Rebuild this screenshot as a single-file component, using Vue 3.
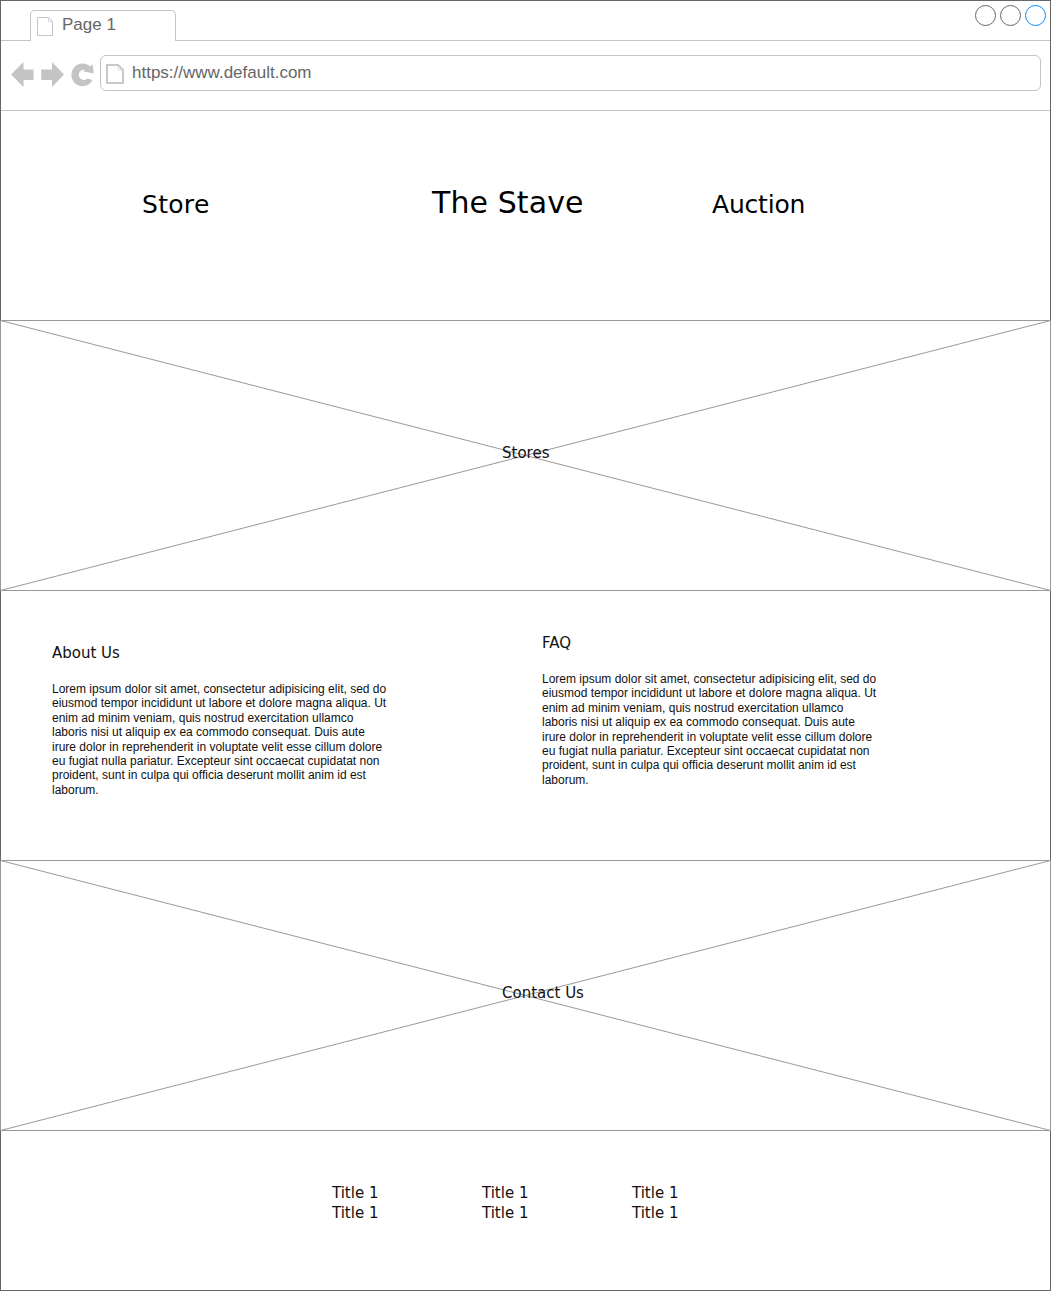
<script setup>
const lorem =
  'Lorem ipsum dolor sit amet, consectetur adipisicing elit, sed do eiusmod tempor incididunt ut labore et dolore magna aliqua. Ut enim ad minim veniam, quis nostrud exercitation ullamco laboris nisi ut aliquip ex ea commodo consequat. Duis aute irure dolor in reprehenderit in voluptate velit esse cillum dolore eu fugiat nulla pariatur. Excepteur sint occaecat cupidatat non proident, sunt in culpa qui officia deserunt mollit anim id est laborum.'
const footer = [
  ['Title 1', 'Title 1'],
  ['Title 1', 'Title 1'],
  ['Title 1', 'Title 1'],
]
</script>

<template>
  <div class="window">
    <div class="tabs">
      <div class="lead"></div>
      <div class="tab">
        <svg class="tab-icon" width="18" height="20" viewBox="0 0 18 20" fill="none" stroke="#c4c4c4">
          <path d="M1.5 .5H12.5L16.5 4.5V18.5H1.5Z" />
          <path d="M12.5 .5V4.5H16.5" stroke-opacity=".6" />
        </svg>
        <span>Page 1</span>
      </div>
      <div class="strip">
        <svg width="72" height="22" viewBox="0 0 72 22" fill="none">
          <circle cx="10.5" cy="10.5" r="10" stroke="#666" />
          <circle cx="35.5" cy="10.5" r="10" stroke="#666" />
          <circle cx="60.5" cy="10.5" r="10" stroke="#008cff" />
        </svg>
      </div>
    </div>

    <div class="toolbar">
      <svg class="nav-icons" width="86" height="28" viewBox="10 61 86 28">
        <g fill="#c4c4c4">
          <path d="M11 74.5L23.5 62V69.5H33.5V80H23.5V87Z" />
          <path d="M64 74.5L52 62V69.5H41.2V80H52V87Z" />
          <path d="M90.2 66.6L92.6 64.2L93.8 73.6L82.6 71.2L85.4 70.1A5 5 0 1 0 87.4 78.4L92.4 80A11.1 11.4 0 1 1 90.2 66.6Z" />
        </g>
      </svg>
      <div class="address">
        <svg class="url-icon" width="20" height="22" viewBox="0 0 20 22" fill="none" stroke="#c8c8c8">
          <path d="M2 2H13L18 7V20H2Z" stroke-width="2" />
          <path d="M13 2V7H18" stroke-opacity=".6" />
        </svg>
        <span>https://www.default.com</span>
      </div>
    </div>

    <header class="site-header">
      <a class="nav-link store">Store</a>
      <h1>The Stave</h1>
      <a class="nav-link auction">Auction</a>
    </header>

    <section class="placeholder">
      <svg width="1051" height="271" viewBox="0 0 1051 271">
        <path d="M.5 .5H1050.5V270.5H.5ZL1050.5 270.5M.5 270.5L1050.5 .5" fill="none" stroke="#999" />
      </svg>
      <span class="label">Stores</span>
    </section>

    <section class="info">
      <article class="about">
        <h2>About Us</h2>
        <p>{{ lorem }}</p>
      </article>
      <article class="faq">
        <h2>FAQ</h2>
        <p>{{ lorem }}</p>
      </article>
    </section>

    <section class="placeholder">
      <svg width="1051" height="271" viewBox="0 0 1051 271">
        <path d="M.5 .5H1050.5V270.5H.5ZL1050.5 270.5M.5 270.5L1050.5 .5" fill="none" stroke="#999" />
      </svg>
      <span class="label">Contact Us</span>
    </section>

    <footer>
      <ul v-for="(col, i) in footer" :key="i">
        <li v-for="(item, j) in col" :key="j">{{ item }}</li>
      </ul>
    </footer>
  </div>
</template>

<style>
body {
  background: #fff;
}
</style>

<style scoped>
.window {
  box-sizing: border-box;
  width: 1051px;
  height: 1291px;
  border: 1px solid #666;
  display: flex;
  flex-direction: column;
  font-family: Verdana, "DejaVu Sans", sans-serif;
  color: #000;
}
.window svg {
  display: block;
  flex: none;
}
.tabs {
  display: flex;
  height: 40px;
  flex: none;
  font: 17px/20px "Liberation Sans", Arial, sans-serif;
  color: #666;
}
.lead {
  box-sizing: border-box;
  width: 29px;
  border-bottom: 1px solid #c4c4c4;
}
.tab {
  box-sizing: border-box;
  width: 146px;
  margin-top: 9px;
  border: 1px solid #c4c4c4;
  border-bottom: 0;
  border-radius: 5px 5px 0 0;
  display: flex;
  padding: 4px 0 0 5px;
}
.tab-icon {
  margin-top: 2px;
}
.tab span {
  margin-left: 8px;
}
.strip {
  box-sizing: border-box;
  flex: 1;
  border-bottom: 1px solid #c4c4c4;
  display: flex;
  justify-content: flex-end;
  padding: 4px 3px 0 0;
}
.toolbar {
  box-sizing: border-box;
  height: 70px;
  flex: none;
  border-bottom: 1px solid #c4c4c4;
  display: flex;
  padding: 14px 9px 0;
}
.nav-icons {
  margin-top: 6px;
}
.address {
  box-sizing: border-box;
  width: 941px;
  height: 36px;
  margin-left: 4px;
  border: 1px solid #c4c4c4;
  border-radius: 6px;
  display: flex;
  padding: 7px 0 0 4px;
  font: 17px/20px "Liberation Sans", Arial, sans-serif;
  color: #666;
}
.address span {
  margin-left: 7px;
}
.site-header {
  height: 209px;
  flex: none;
  display: flex;
  align-items: baseline;
  box-sizing: border-box;
  padding: 74px 0 0 141px;
}
.nav-link {
  width: 290px;
  font-size: 25px;
  line-height: 36px;
}
.store {
  letter-spacing: 0.3px;
}
.auction {
  letter-spacing: -0.2px;
}
h1 {
  width: 280px;
  margin: 0;
  font-size: 30px;
  line-height: 36px;
  font-weight: 400;
  letter-spacing: 0.1px;
}
.placeholder {
  position: relative;
  flex: none;
  width: 1051px;
  height: 271px;
  margin: 0 -1px;
}
.label {
  position: absolute;
  left: 502px;
  top: 123px;
  font-size: 15px;
  line-height: 20px;
}
.info {
  height: 269px;
  flex: none;
  display: flex;
}
.about {
  width: 337px;
  margin: 52px 0 0 51px;
}
.faq {
  width: 337px;
  margin: 42px 0 0 153px;
}
h2 {
  margin: 0 0 19px;
  font-size: 15px;
  line-height: 20px;
  font-weight: 400;
}
.label,
h2,
p,
li {
  color: #111;
}
p {
  margin: 0;
  font: 12px/14.4px "Liberation Sans", Arial, sans-serif;
}
footer {
  display: flex;
  padding: 52px 0 0 331px;
}
ul {
  list-style: none;
  width: 150px;
  margin: 0;
  padding: 0;
}
li {
  font-size: 15px;
  line-height: 20px;
}
</style>
